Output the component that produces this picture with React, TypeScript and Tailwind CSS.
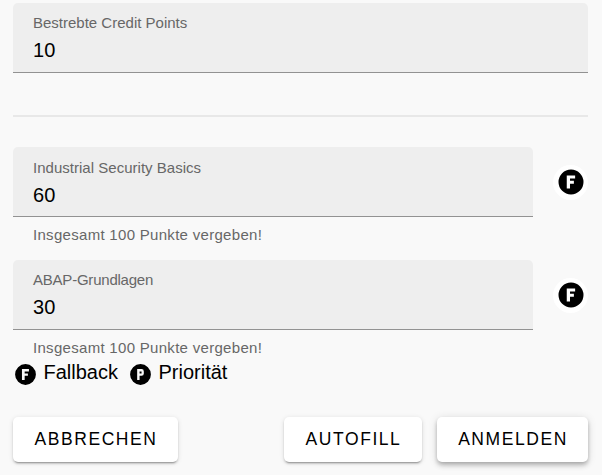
import React from "react";

const DISC = "M12,2A10,10 0 0,1 22,12A10,10 0 0,1 12,22A10,10 0 0,1 2,12A10,10 0 0,1 12,2Z";
const LETTERS = {
  F: "M8.6,6.8V17.2H11.2V13.3H14.3V11H11.2V9.2H15.3V6.8H8.6",
  P: "M8.8,6.8V17.2H11.1V13.2H13A2.2,2.2 0 0,0 15.2,11V9A2.2,2.2 0 0,0 13,6.8H8.8M11.1,9H13V11H11.1V9",
};

function CircleIcon({ letter, className }: { letter: "F" | "P"; className: string }) {
  return (
    <svg viewBox="0 0 24 24" className={className} fill="black" aria-label={letter}>
      <path d={LETTERS[letter] + DISC} />
    </svg>
  );
}

type FieldProps = { label: string; value: string; labelClass: string; padding: string };

function Field({ label, value, labelClass, padding }: FieldProps) {
  return (
    <div className={"h-[70px] w-full rounded-t-[5px] border-b border-[#929292] bg-[#eeeeee] pl-5 " + padding}>
      <div className={"text-[15px] leading-[18px] text-[#676767] " + labelClass}>{label}</div>
      <div className="mt-[6px] text-[20px] leading-6 tracking-[0.19px] text-black">{value}</div>
    </div>
  );
}

function PointsRow(props: FieldProps) {
  return (
    <div className="flex gap-5">
      <div className="w-[520px]">
        <Field {...props} />
        <p className="h-[43px] pl-5 pt-[9px] text-[15px] leading-[18px] tracking-[0.3px] text-[#676767]">
          Insgesamt 100 Punkte vergeben!
        </p>
      </div>
      <button className="mt-[17.5px] flex size-[35px] items-center justify-center rounded-full bg-white">
        <CircleIcon letter="F" className="size-[30px]" />
      </button>
    </div>
  );
}

function Button({ children, className }: { children: string; className: string }) {
  return (
    <button
      className={
        "h-[45px] rounded-[5px] bg-white pl-[1px] text-[17.5px] tracking-[1.56px] text-black " + className
      }
    >
      {children}
    </button>
  );
}

const RAISED =
  "shadow-[0_3px_1px_-2px_rgba(0,0,0,0.2),0_2px_2px_0_rgba(0,0,0,0.14),0_1px_5px_0_rgba(0,0,0,0.12)]";
const HOVERED =
  "shadow-[0_2px_4px_-1px_rgba(0,0,0,0.2),0_4px_5px_0_rgba(0,0,0,0.14),0_1px_10px_0_rgba(0,0,0,0.12)]";

export default function App() {
  return (
    <main className="h-[475px] w-[602px] overflow-hidden bg-[#f9f9f9] pl-[13px] pr-[14px] pt-[3px] font-['Liberation_Sans',Arial,sans-serif]">
      <Field label="Bestrebte Credit Points" value="10" labelClass="tracking-[0px]" padding="pt-[11px]" />
      <hr className="mt-[42px] mb-[30px] h-[2px] border-0 bg-[#e8e8e8]" />
      <PointsRow label="Industrial Security Basics" value="60" labelClass="tracking-[0.02px]" padding="pt-3" />
      <PointsRow label="ABAP-Grundlagen" value="30" labelClass="tracking-[-0.22px]" padding="pt-[11px]" />
      <div className="-mt-[14px] flex h-[25px] text-[20px] leading-[25px] text-black">
        <CircleIcon letter="F" className="mt-[3px] size-[25px]" />
        <span className="ml-[5.5px] w-[84.5px] pt-px">Fallback</span>
        <CircleIcon letter="P" className="mt-[3px] size-[25px]" />
        <span className="ml-[5.5px] pt-px">Priorität</span>
      </div>
      <div className="mt-[33px] flex">
        <Button className={"w-[165px] " + RAISED}>ABBRECHEN</Button>
        <Button className={"ml-auto w-[138px] " + RAISED}>AUTOFILL</Button>
        <Button className={"ml-[15px] w-[151px] " + HOVERED}>ANMELDEN</Button>
      </div>
    </main>
  );
}
